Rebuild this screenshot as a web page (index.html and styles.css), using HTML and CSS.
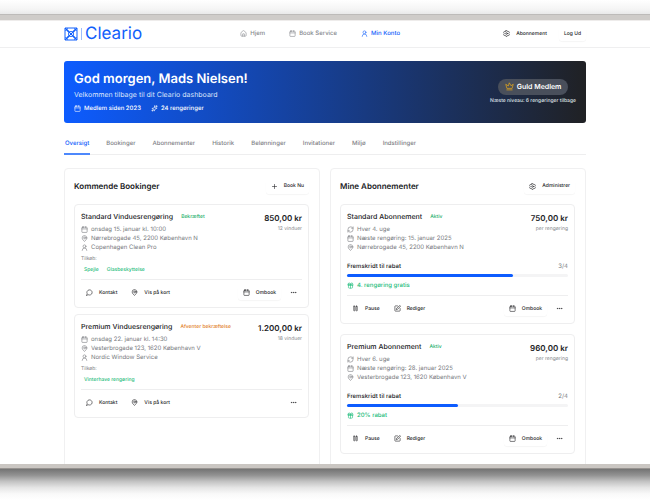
FILE: index.html
```html
<!DOCTYPE html>
<html lang="da">
<head>
<meta charset="utf-8">
<meta name="viewport" content="width=device-width, initial-scale=1">
<title>Cleario – Min Konto</title>
<link rel="stylesheet" href="styles.css">
</head>
<body>
<svg class="sprite" aria-hidden="true">
  <symbol id="calendar" viewBox="0 0 24 24"><rect x="3" y="4" width="18" height="18" rx="2"/><path d="M8 2v4M16 2v4M3 10h18"/></symbol>
  <symbol id="home" viewBox="0 0 24 24"><path d="M3 10a2 2 0 0 1 .7-1.500l7-6a2 2 0 0 1 2.600 0l7 6A2 2 0 0 1 21 10v9a2 2 0 0 1-2 2H5a2 2 0 0 1-2-2z"/><path d="M9 21v-7a1 1 0 0 1 1-1h4a1 1 0 0 1 1 1v7"/></symbol>
  <symbol id="user" viewBox="0 0 24 24"><circle cx="12" cy="8" r="5"/><path d="M4 22a8 8 0 0 1 16 0"/></symbol>
  <symbol id="gear" viewBox="0 0 24 24"><circle cx="12" cy="12" r="3"/><path d="M10 2h4l1 3 2 1 3-1 2 4-2 2v2l2 2-2 4-3-1-2 1-1 3h-4l-1-3-2-1-3 1-2-4 2-2v-2L2 9l2-4 3 1 2-1z"/></symbol>
  <symbol id="sparkle" viewBox="0 0 24 24"><path d="M13 3l1 7 7 1-7 3-3 7-2-7-6-2 7-2zM19 2v5M16.500 4.500h5M5 17v4M3 19h4"/></symbol>
  <symbol id="crown" viewBox="0 0 24 24"><path d="M12 3l4 7 6-4-3 11H5L2 6l6 4zM5 21h14"/></symbol>
  <symbol id="pin" viewBox="0 0 24 24"><path d="M20 10c0 5-5.500 10-8 12-2.500-2-8-7-8-12a8 8 0 0 1 16 0z"/><circle cx="12" cy="10" r="3"/></symbol>
  <symbol id="chat" viewBox="0 0 24 24"><path d="M7.900 20A9 9 0 1 0 4 16.100L2 22z"/></symbol>
  <symbol id="plus" viewBox="0 0 24 24"><path d="M5 12h14M12 5v14"/></symbol>
  <symbol id="dots" viewBox="0 0 24 24"><circle cx="5" cy="12" r="1"/><circle cx="12" cy="12" r="1"/><circle cx="19" cy="12" r="1"/></symbol>
  <symbol id="repeat" viewBox="0 0 24 24"><path d="M3 12a9 9 0 0 1 9-9 9.800 9.800 0 0 1 6.700 2.700L21 8M21 3v5h-5M21 12a9 9 0 0 1-9 9 9.800 9.800 0 0 1-6.700-2.700L3 16M8 16H3v5"/></symbol>
  <symbol id="gift" viewBox="0 0 24 24"><rect x="3" y="8" width="18" height="4" rx="1"/><path d="M12 8v13M19 12v7a2 2 0 0 1-2 2H7a2 2 0 0 1-2-2v-7M7.500 8a2.500 2.500 0 0 1 0-5C11 3 12 8 12 8s1-5 4.500-5a2.500 2.500 0 0 1 0 5"/></symbol>
  <symbol id="pause" viewBox="0 0 24 24"><rect x="6" y="4" width="4" height="16" rx="1"/><rect x="14" y="4" width="4" height="16" rx="1"/></symbol>
  <symbol id="edit" viewBox="0 0 24 24"><path d="M12 3H5a2 2 0 0 0-2 2v14a2 2 0 0 0 2 2h14a2 2 0 0 0 2-2v-7"/><path d="M18.400 2.600a2 2 0 0 1 3 3L12 15l-4 1 1-4z"/></symbol>
</svg>

<div class="shade shade-top"></div>
<div class="screen">
  <header class="topbar">
    <a class="brand" href="#" aria-label="Cleario">
      <svg class="mark" viewBox="0 0 28 28" aria-hidden="true"><path d="M2 2h24v24H2zM2 2l24 24M26 2L2 26"/><path d="M2 6c10 0 10 16 0 16M26 6c-10 0-10 16 0 16M6 2c0 10 16 10 16 0M6 26c0-10 16-10 16 0"/></svg>
      <span class="brand-line"></span>
      <span class="brand-name">Cleario</span>
    </a>
    <nav class="nav">
      <a href="#"><svg class="icon"><use href="#home"/></svg>Hjem</a>
      <a href="#"><svg class="icon"><use href="#calendar"/></svg>Book Service</a>
      <a class="active" href="#"><svg class="icon"><use href="#user"/></svg>Min Konto</a>
    </nav>
    <div class="account">
      <button class="btn"><svg class="icon"><use href="#gear"/></svg>Abonnement</button>
      <button class="btn outlined">Log Ud</button>
    </div>
  </header>

  <main>
    <section class="hero">
      <div>
        <h1>God morgen, Mads Nielsen!</h1>
        <p class="welcome">Velkommen tilbage til dit Cleario dashboard</p>
        <div class="facts">
          <span><svg class="icon"><use href="#calendar"/></svg>Medlem siden 2023</span>
          <span><svg class="icon"><use href="#sparkle"/></svg>24 rengøringer</span>
        </div>
      </div>
      <div class="level">
        <span class="level-badge"><svg class="icon crown"><use href="#crown"/></svg>Guld Medlem</span>
        <p>Næste niveau: 6 rengøringer tilbage</p>
      </div>
    </section>

    <nav class="tabs">
      <a class="active" href="#">Oversigt</a>
      <a href="#">Bookinger</a>
      <a href="#">Abonnementer</a>
      <a href="#">Historik</a>
      <a href="#">Belønninger</a>
      <a href="#">Invitationer</a>
      <a href="#">Miljø</a>
      <a href="#">Indstillinger</a>
    </nav>

    <div class="columns">
      <section class="panel">
        <div class="panel-head">
          <h2>Kommende Bookinger</h2>
          <button class="btn outlined"><svg class="icon"><use href="#plus"/></svg>Book Nu</button>
        </div>
        <article class="card">
          <div class="card-head">
            <h3>Standard Vinduesrengøring</h3><span class="status">Bekræftet</span>
            <div class="price"><strong>850,00 kr</strong><span>12 vinduer</span></div>
          </div>
          <ul class="details">
            <li><svg class="icon"><use href="#calendar"/></svg>onsdag 15. januar kl. 10:00</li>
            <li><svg class="icon"><use href="#pin"/></svg>Nørrebrogade 45, 2200 København N</li>
            <li><svg class="icon"><use href="#user"/></svg>Copenhagen Clean Pro</li>
          </ul>
          <p class="extras-label">Tilkøb:</p>
          <div class="extras"><span>Spejle</span><span>Glasbeskyttelse</span></div>
          <div class="actions">
            <button class="btn"><svg class="icon"><use href="#chat"/></svg>Kontakt</button>
            <button class="btn"><svg class="icon"><use href="#pin"/></svg>Vis på kort</button>
            <div class="actions-end">
              <button class="btn outlined"><svg class="icon"><use href="#calendar"/></svg>Ombook</button>
              <button class="btn" aria-label="Mere"><svg class="icon"><use href="#dots"/></svg></button>
            </div>
          </div>
        </article>
        <article class="card">
          <div class="card-head">
            <h3>Premium Vinduesrengøring</h3><span class="status pending">Afventer bekræftelse</span>
            <div class="price"><strong>1.200,00 kr</strong><span>18 vinduer</span></div>
          </div>
          <ul class="details">
            <li><svg class="icon"><use href="#calendar"/></svg>onsdag 22. januar kl. 14:30</li>
            <li><svg class="icon"><use href="#pin"/></svg>Vesterbrogade 123, 1620 København V</li>
            <li><svg class="icon"><use href="#user"/></svg>Nordic Window Service</li>
          </ul>
          <p class="extras-label">Tilkøb:</p>
          <div class="extras"><span>Vinterhave rengøring</span></div>
          <div class="actions">
            <button class="btn"><svg class="icon"><use href="#chat"/></svg>Kontakt</button>
            <button class="btn"><svg class="icon"><use href="#pin"/></svg>Vis på kort</button>
            <div class="actions-end">
              <button class="btn" aria-label="Mere"><svg class="icon"><use href="#dots"/></svg></button>
            </div>
          </div>
        </article>
      </section>

      <section class="panel subscriptions">
        <div class="panel-head">
          <h2>Mine Abonnementer</h2>
          <button class="btn outlined"><svg class="icon"><use href="#gear"/></svg>Administrer</button>
        </div>
        <article class="card">
          <div class="card-head">
            <h3>Standard Abonnement</h3><span class="status">Aktiv</span>
            <div class="price"><strong>750,00 kr</strong><span>per rengøring</span></div>
          </div>
          <ul class="details">
            <li><svg class="icon"><use href="#repeat"/></svg>Hver 4. uge</li>
            <li><svg class="icon"><use href="#calendar"/></svg>Næste rengøring: 15. januar 2025</li>
            <li><svg class="icon"><use href="#pin"/></svg>Nørrebrogade 45, 2200 København N</li>
          </ul>
          <div class="progress-label"><strong>Fremskridt til rabat</strong><span>3/4</span></div>
          <div class="progress"><div style="width:75%"></div></div>
          <p class="reward"><svg class="icon"><use href="#gift"/></svg>4. rengøring gratis</p>
          <div class="actions">
            <button class="btn"><svg class="icon"><use href="#pause"/></svg>Pause</button>
            <button class="btn"><svg class="icon"><use href="#edit"/></svg>Rediger</button>
            <div class="actions-end">
              <button class="btn outlined"><svg class="icon"><use href="#calendar"/></svg>Ombook</button>
              <button class="btn" aria-label="Mere"><svg class="icon"><use href="#dots"/></svg></button>
            </div>
          </div>
        </article>
        <article class="card">
          <div class="card-head">
            <h3>Premium Abonnement</h3><span class="status">Aktiv</span>
            <div class="price"><strong>960,00 kr</strong><span>per rengøring</span></div>
          </div>
          <ul class="details">
            <li><svg class="icon"><use href="#repeat"/></svg>Hver 6. uge</li>
            <li><svg class="icon"><use href="#calendar"/></svg>Næste rengøring: 28. januar 2025</li>
            <li><svg class="icon"><use href="#pin"/></svg>Vesterbrogade 123, 1620 København V</li>
          </ul>
          <div class="progress-label"><strong>Fremskridt til rabat</strong><span>2/4</span></div>
          <div class="progress"><div style="width:50%"></div></div>
          <p class="reward"><svg class="icon"><use href="#gift"/></svg>20% rabat</p>
          <div class="actions">
            <button class="btn"><svg class="icon"><use href="#pause"/></svg>Pause</button>
            <button class="btn"><svg class="icon"><use href="#edit"/></svg>Rediger</button>
            <div class="actions-end">
              <button class="btn outlined"><svg class="icon"><use href="#calendar"/></svg>Ombook</button>
              <button class="btn" aria-label="Mere"><svg class="icon"><use href="#dots"/></svg></button>
            </div>
          </div>
        </article>
      </section>
    </div>
  </main>
</div>
<div class="shade shade-bottom"></div>
</body>
</html>
```
FILE: styles.css
```css
* { box-sizing: border-box; margin: 0; padding: 0; }

body {
  display: flex;
  flex-direction: column;
  height: 100vh;
  overflow: hidden;
  background: #fff;
  color: #202124;
  font: 6px/9px Inter, "Liberation Sans", sans-serif;
  text-rendering: geometricPrecision;
}

a { color: inherit; text-decoration: none; }
ul { list-style: none; }
.sprite { position: absolute; width: 0; height: 0; }

.icon {
  flex: none;
  width: 7px;
  height: 7px;
  fill: none;
  stroke: currentColor;
  stroke-width: 2;
  stroke-linecap: round;
  stroke-linejoin: round;
}

/* Device frame */
.shade-top { flex: 0 0 15px; background: linear-gradient(#fff, #f5f5f5 60%, #e6e6e6); }
.shade-bottom {
  flex: 0 0 32px;
  border-top: 1px solid #96928f;
  background: linear-gradient(#737373, #929292 20%, #c2c2c2 40%, #e5e5e5 60%, #f9f9f9 80%, #fff);
}
.screen {
  flex: 1;
  min-height: 0;
  overflow: hidden;
  border-top: 5px solid #cfccc9;
  border-bottom: 4px solid #cac6c2;
  box-shadow: inset 0 1px #eeeceb, 0 -1px #bdbbb9;
}

/* Header */
.topbar {
  display: flex;
  align-items: center;
  justify-content: space-between;
  height: 28px;
  padding: 0 64px;
  border-bottom: 1px solid #efeff0;
}
.brand { display: flex; align-items: center; gap: 3px; color: #1260fb; }
.mark { width: 14px; height: 14px; fill: none; stroke: currentColor; stroke-width: 2; }
.brand-line { width: 1px; height: 12px; background: #9dbdfc; }
.brand-name { font-size: 17px; line-height: 20px; }
.nav { display: flex; gap: 24px; color: #85878c; font-weight: 500; }
.nav a { display: flex; align-items: center; gap: 3px; }
.nav .active { color: #1260fb; }
.account { display: flex; justify-content: flex-end; gap: 7px; }

.btn {
  display: flex;
  align-items: center;
  gap: 6px;
  height: 15px;
  padding: 0 5px;
  border: 0;
  border-radius: 3px;
  background: transparent;
  color: #202124;
  font: 500 5px/10px Inter, "Liberation Sans", sans-serif;
  text-rendering: inherit;
}
.outlined { background: #fff; box-shadow: 0 1px 1px #f6f6f6; }

/* Page */
main { padding: 13px 64px 0; }

.hero {
  display: flex;
  align-items: center;
  justify-content: space-between;
  padding: 10px;
  border-radius: 3px;
  background: linear-gradient(90deg, #0d5cff, #202124);
  color: #fff;
}
h1 { font-size: 13px; line-height: 17px; font-weight: 600; }
.welcome { margin-top: 2px; color: #dbe5fb; font-size: 7px; line-height: 10px; }
.facts { display: flex; gap: 10px; margin-top: 4px; font-weight: 500; }
.facts span { display: flex; align-items: center; gap: 3px; }
.level { text-align: center; color: #dfe2e8; font-size: 5px; font-weight: 500; }
.level-badge {
  display: inline-flex;
  align-items: center;
  gap: 3px;
  height: 16px;
  margin-bottom: 2px;
  padding: 0 7px;
  border-radius: 8px;
  background: #494f5b;
  color: #fff;
  font-size: 7px;
  font-weight: 600;
}
.crown { width: 9px; height: 9px; color: #e0a51d; }

.tabs {
  display: flex;
  gap: 15px;
  margin-top: 13px;
  border-bottom: 1px solid #eeeeef;
  color: #7e8085;
  font-weight: 500;
}
.tabs a { height: 18px; padding: 3px 1px 0; }
.tabs .active { height: 19px; margin-bottom: -1px; border-bottom: 2px solid #4d88fc; color: #1260fb; }

.columns { display: grid; grid-template-columns: 1fr 1fr; gap: 10px; margin-top: 13px; }
.panel {
  display: flex;
  flex-direction: column;
  gap: 6px;
  padding: 9px 10px 30px 9px;
  border: 1px solid #f0f0f1;
  border-radius: 4px;
}
.subscriptions { gap: 10px; }
.panel-head { display: flex; align-items: center; justify-content: space-between; height: 16px; margin-bottom: 4px; }
.subscriptions .panel-head { margin-bottom: 0; }
h2 { font-size: 8px; line-height: 12px; font-weight: 600; }

.card { padding: 7px 6px; border: 1px solid #eeeeef; border-radius: 4px; }
.card-head { display: flex; align-items: flex-start; height: 13px; }
h3 { font-size: 7px; line-height: 10px; font-weight: 500; }
.status { margin-left: 8px; color: #17ae68; font-size: 5px; line-height: 10px; font-weight: 500; }
.pending { color: #df7c1d; }
.price { display: flex; flex-direction: column; margin-left: auto; text-align: right; }
.price strong { font-size: 8px; line-height: 12px; font-weight: 600; }
.price span { color: #85878c; font-size: 5px; line-height: 10px; }
.details { color: #77797e; }
.details li { display: flex; align-items: center; gap: 3px; }
.extras-label { margin-top: 3px; color: #77797e; font-size: 5px; }
.extras { display: flex; gap: 8px; margin-top: 1px; padding-left: 3px; color: #1ebc7b; font-size: 5px; line-height: 10px; font-weight: 500; }
.actions { display: flex; gap: 4px; margin-top: 4px; padding-top: 5px; border-top: 1px solid #eeeeef; }
.actions-end { display: flex; gap: 4px; margin-left: auto; }
.subscriptions .actions { margin-top: 5px; }

.progress-label { display: flex; justify-content: space-between; margin-top: 10px; line-height: 10px; }
.progress-label strong { font-weight: 500; }
.progress-label span { color: #77797e; }
.progress { height: 3px; margin-top: 2px; border-radius: 2px; background: #f4f4f5; }
.progress div { height: 100%; border-radius: 2px; background: #0d5cff; }
.reward { display: flex; align-items: center; gap: 3px; margin-top: 4px; color: #1ebc7b; font-weight: 500; }
```
